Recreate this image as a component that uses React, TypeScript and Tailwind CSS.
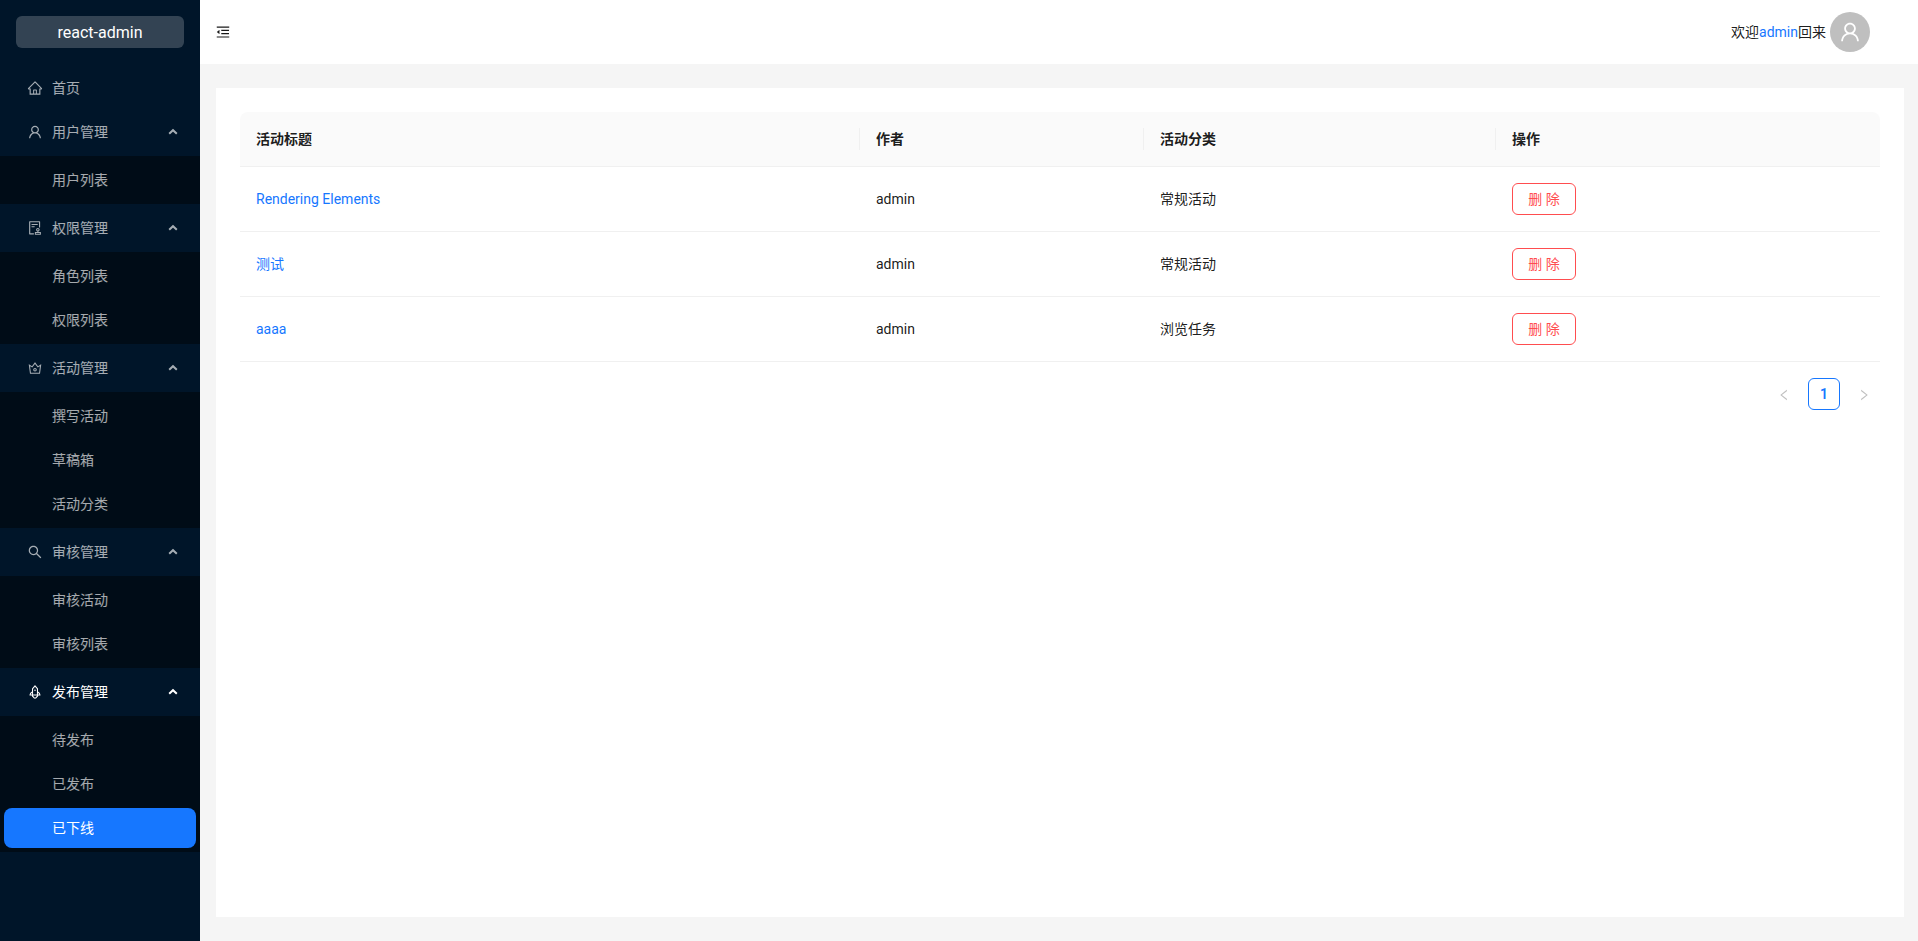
import React from 'react';
import {
  AiOutlineAudit,
  AiOutlineCrown,
  AiOutlineHome,
  AiOutlineLeft,
  AiOutlineMenuFold,
  AiOutlineRight,
  AiOutlineRocket,
  AiOutlineSearch,
  AiOutlineUser,
} from 'react-icons/ai';

type MenuGroup = {
  title: string;
  icon: React.ReactNode;
  open?: boolean;
  items: string[];
};

const groups: MenuGroup[] = [
  { title: '用户管理', icon: <AiOutlineUser size={16} />, items: ['用户列表'] },
  { title: '权限管理', icon: <AiOutlineAudit size={16} />, items: ['角色列表', '权限列表'] },
  { title: '活动管理', icon: <AiOutlineCrown size={16} />, items: ['撰写活动', '草稿箱', '活动分类'] },
  { title: '审核管理', icon: <AiOutlineSearch size={16} />, items: ['审核活动', '审核列表'] },
  { title: '发布管理', icon: <AiOutlineRocket size={16} />, open: true, items: ['待发布', '已发布', '已下线'] },
];

const rows = [
  { title: 'Rendering Elements', author: 'admin', category: '常规活动' },
  { title: '测试', author: 'admin', category: '常规活动' },
  { title: 'aaaa', author: 'admin', category: '浏览任务' },
];

const Chevron = () => (
  <svg width="10" height="10" viewBox="0 0 10 10" className="ml-auto mr-[22px]" fill="none">
    <path d="M1.2 6.8 L5 3.2 L8.8 6.8" stroke="currentColor" strokeWidth="2" />
  </svg>
);

const Sidebar = () => (
  <aside className="w-[200px] shrink-0 bg-[#001529] text-[14px] text-white/65">
    <div className="h-16 px-4 pt-4">
      <div className="flex h-8 items-center justify-center rounded-md bg-white/20 pt-px text-base text-white">
        react-admin
      </div>
    </div>
    <nav className="flex flex-col pt-1">
      <div className="mb-1 flex h-10 items-center pl-[27px]">
        <AiOutlineHome size={16} />
        <span className="ml-[9px]">首页</span>
      </div>
      {groups.map((group) => (
        <div key={group.title}>
          <div className={`mb-1 flex h-10 items-center pl-[27px] ${group.open ? 'text-white' : ''}`}>
            {group.icon}
            <span className="ml-[9px]">{group.title}</span>
            <Chevron />
          </div>
          <ul className="mb-1 flex flex-col gap-1 bg-[#000c17] py-1">
            {group.items.map((item) => (
              <li
                key={item}
                className={`mx-1 flex h-10 items-center rounded-lg pl-12 ${
                  item === '已下线' ? 'bg-[#1677ff] text-white' : ''
                }`}
              >
                {item}
              </li>
            ))}
          </ul>
        </div>
      ))}
    </nav>
  </aside>
);

const Header = () => (
  <header className="flex h-16 shrink-0 items-center bg-white pl-[15px] pr-12 text-[14px] text-black/90">
    <AiOutlineMenuFold size={16} />
    <div className="ml-auto flex items-center">
      <span>
        欢迎<span className="text-[#1677ff]">admin</span>回来
      </span>
      <span className="ml-1 flex h-10 w-10 items-center justify-center rounded-full bg-[#bfbfbf] text-white">
        <AiOutlineUser size={24} />
      </span>
    </div>
  </header>
);

const headCell = 'relative h-[55px] border-b border-[#f0f0f0] bg-[#fafafa] px-4 text-left font-semibold';
const cell = 'h-[65px] border-b border-[#f0f0f0] px-4';
const divider = 'absolute -left-px top-1/2 h-[22px] w-px -translate-y-1/2 bg-[#f0f0f0]';

const ArticleTable = () => (
  <table className="w-full table-fixed border-separate border-spacing-0 text-[14px] text-black/90">
    <thead>
      <tr>
        <th className={`${headCell} w-[620px] rounded-tl-lg`}>活动标题</th>
        <th className={`${headCell} w-[284px]`}>
          <span className={divider} />
          作者
        </th>
        <th className={`${headCell} w-[352px]`}>
          <span className={divider} />
          活动分类
        </th>
        <th className={`${headCell} rounded-tr-lg`}>
          <span className={divider} />
          操作
        </th>
      </tr>
    </thead>
    <tbody>
      {rows.map((row) => (
        <tr key={row.title}>
          <td className={cell}>
            <a href="#" className="text-[#1677ff]">
              {row.title}
            </a>
          </td>
          <td className={cell}>{row.author}</td>
          <td className={cell}>{row.category}</td>
          <td className={cell}>
            <button className="h-8 w-16 rounded-md border border-[#ff4d4f] bg-white text-[#ff4d4f]">删 除</button>
          </td>
        </tr>
      ))}
    </tbody>
  </table>
);

const Pagination = () => (
  <div className="mt-4 flex justify-end gap-2 text-[14px]">
    <span className="flex h-8 w-8 items-center justify-center pt-0.5 text-black/25">
      <AiOutlineLeft size={14} />
    </span>
    <span className="flex h-8 w-8 items-center justify-center rounded-md border border-[#1677ff] font-semibold text-[#1677ff]">
      1
    </span>
    <span className="flex h-8 w-8 items-center justify-center pt-0.5 text-black/25">
      <AiOutlineRight size={14} />
    </span>
  </div>
);

export default function App() {
  return (
    <div className="flex h-[941px] overflow-hidden bg-[#f5f5f5] font-['Roboto','Noto_Sans_CJK_SC',sans-serif]">
      <Sidebar />
      <div className="flex min-w-0 flex-1 flex-col">
        <Header />
        <main className="my-6 ml-4 mr-[14px] flex-1 bg-white p-6">
          <ArticleTable />
          <Pagination />
        </main>
      </div>
    </div>
  );
}
